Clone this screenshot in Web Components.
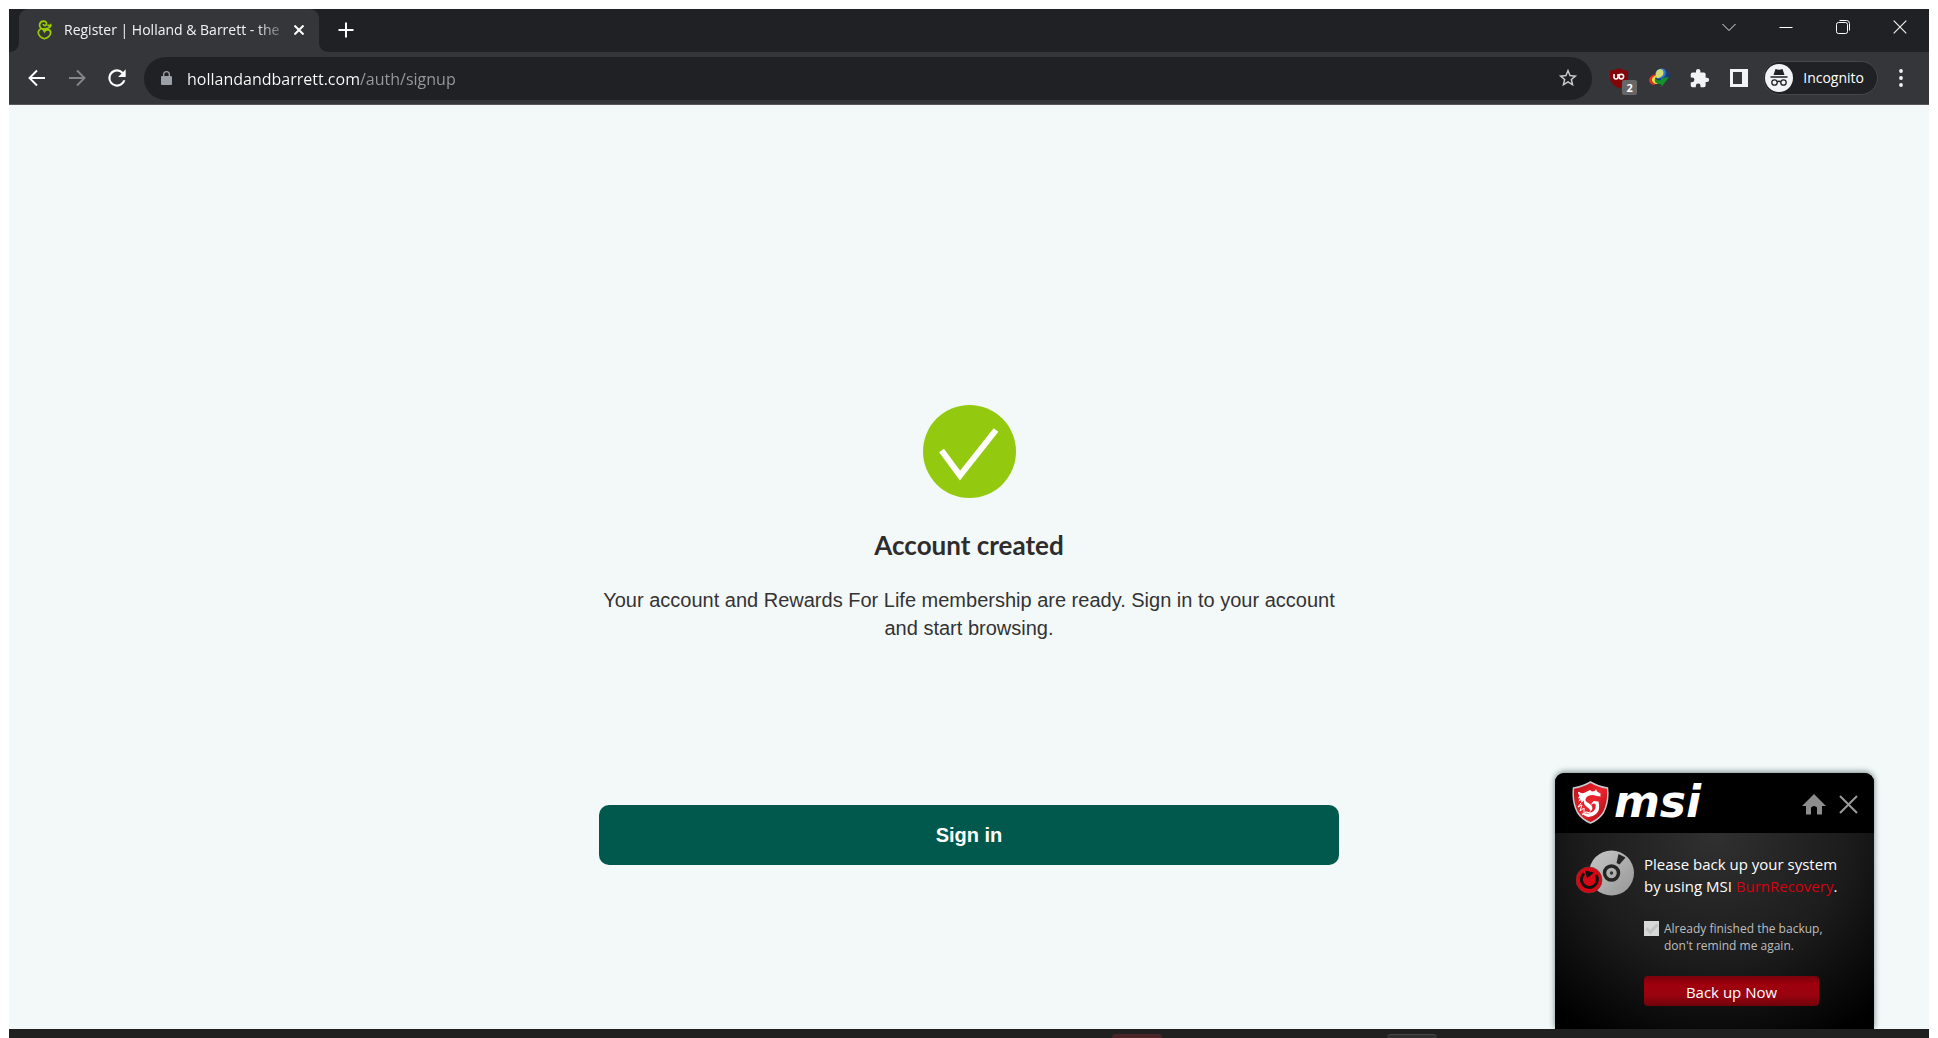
<!DOCTYPE html>
<html lang="en">
<head>
<meta charset="utf-8">
<title>Register | Holland &amp; Barrett</title>
<style>
html,body{height:100%}
body{margin:0;background:#fff;font-family:"Open Sans","Noto Sans",sans-serif;font-size:14px}
</style>
</head>
<body>
<desktop-screen>
  <tab-strip><browser-tab>Register | Holland &amp; Barrett - the</browser-tab></tab-strip>
  <tool-bar></tool-bar>
  <result-page>
    <span slot="title">Account created</span>
    <span slot="message">Your account and Rewards For Life membership are ready. Sign in to your account and start browsing.</span>
    <span slot="action">Sign in</span>
  </result-page>
  <task-bar></task-bar>
  <backup-popup slot="popup"></backup-popup>
</desktop-screen>
<script>
function define(name, markup) {
  const template = document.createElement('template');
  template.innerHTML = '<style>:host,*{box-sizing:border-box}button{font:inherit;color:inherit;background:none;border:0;padding:0;margin:0;cursor:pointer}svg{display:block}</style>' + markup;
  customElements.define(name, class extends HTMLElement {
    constructor() {
      super();
      this.attachShadow({mode: 'open'}).append(template.content.cloneNode(true));
    }
  });
}

define('desktop-screen', `
<style>
:host{display:flex;flex-direction:column;height:100vh;padding:9px 9px 0;position:relative;overflow:hidden}
slot[name=popup]::slotted(*){position:absolute;right:64px;bottom:9px}
</style>
<slot></slot><slot name="popup"></slot>`);

define('tab-strip', `
<style>
:host{display:flex;height:43px;background:#202124;color:#f1f3f4;flex:none}
.lead{width:10px;background:#35363a}
.lead i{display:block;height:100%;background:#202124;border-bottom-right-radius:9px}
.tail{background:#35363a}
.tail i{display:block;height:100%;width:9px;background:#202124;border-bottom-left-radius:9px}
.new{width:36px;height:42px;display:grid;place-items:center}
.win{margin-left:auto;display:flex;padding-right:1px}
.win button{width:57px;height:36px;display:grid;place-items:center}
</style>
<div class="lead"><i></i></div>
<slot></slot>
<div class="tail"><i></i></div>
<button class="new" aria-label="New tab"><svg width="16" height="16" stroke="#fff" stroke-width="2"><path d="M8 0.500v15M.5 8h15"/></svg></button>
<div class="win">
<button aria-label="Search tabs"><svg width="14" height="14" fill="none" stroke="#e8e8e8" stroke-width="1"><path d="M.5 4 7 10.500 13.500 4"/></svg></button>
<button aria-label="Minimise"><svg width="14" height="14" stroke="#fff"><path d="M.5 7.500h13"/></svg></button>
<button aria-label="Restore"><svg width="14" height="14" fill="none" stroke="#fff"><rect x=".5" y="2.500" width="11" height="11" rx="2"/><path d="M3.500.5h7q3 0 3 3v7"/></svg></button>
<button aria-label="Close"><svg width="14" height="14" stroke="#eee" stroke-width="1.200"><path d="M.7.7l12.600 12.600M13.300.7.7 13.300"/></svg></button>
</div>`);

define('browser-tab', `
<style>
:host{display:flex;align-items:center;width:300px;background:#35363a;border-radius:9px 9px 0 0;padding:0 10px 2px 17px}
.title{flex:1;margin-left:10px;overflow:hidden;white-space:nowrap;line-height:24px;-webkit-mask-image:linear-gradient(90deg,#000 88%,transparent 104%);mask-image:linear-gradient(90deg,#000 88%,transparent 104%)}
button{width:20px;height:20px;margin-left:7px;display:grid;place-items:center}
</style>
<svg width="18" height="20" fill="none" stroke="#9c0" stroke-width="1.700"><path d="M5.500 8.500C2.500 6.500 3 1.500 7.500 1.200c3.200 0 4 3 2 4.200Q7.500 6 7.300 4M5.500 8.500q3.500 1 7-.5 2.800-1.300 2.200-3.200-1.500 1.500-3 .2M5.500 8.500Q2 10 2.300 13.200q.7 3.800 6.200 5.600 5.500-1.800 6.200-5.600.2-3.400-2.900-3.600-2.300 0-3.300 2-1-2.200-3-3.100"/></svg>
<span class="title"><slot></slot></span>
<button aria-label="Close tab"><svg width="10" height="10" stroke="#fff" stroke-width="2"><path d="M0.500.5l9 9M9.500.5l-9 9"/></svg></button>`);

define('tool-bar', `
<style>
:host{display:flex;align-items:center;height:53px;background:#35363a;border-bottom:1px solid #5b5659;padding:0 8px;flex:none;color:#fff}
button{display:grid;place-items:center;width:40px;height:40px;flex:none}
address-bar{margin:0 7px}
.badged{position:relative}
.badge{position:absolute;left:23px;top:22px;width:15px;height:15px;border-radius:2px;background:#666;font:bold 11px/15px "Open Sans",sans-serif;text-align:center}
.mode{display:flex;width:auto;height:34px;gap:10px;align-items:center;border:1px solid #46474b;border-radius:17px;background:#202124;padding:0 13px 0 1px;margin:0 3px 0 4px;line-height:20px}
</style>
<button aria-label="Back"><svg width="18" height="18" fill="none" stroke="#fff" stroke-width="1.900"><path d="M17 9H2M9 1.500 1.500 9 9 16.500"/></svg></button>
<button aria-label="Forward"><svg width="18" height="18" fill="none" stroke="#85868a" stroke-width="1.900"><path d="M1 9h15M9 1.500 16.500 9 9 16.500"/></svg></button>
<button aria-label="Reload"><svg width="26" height="26" viewBox="0 0 24 24" fill="#fff"><path d="M17.650 6.350A7.950 7.950 0 0 0 12 4a8 8 0 1 0 7.730 10h-2.080A6 6 0 1 1 12 6c1.660 0 3.140.69 4.220 1.780L13 11h7V4l-2.350 2.350z"/></svg></button>
<address-bar></address-bar>
<button class="badged" aria-label="Content blocker">
<svg width="20" height="22" viewBox="0 0 20 22"><path d="M10 1Q13.500 3.500 19 3.500V10c0 5-3 8-9 11.500C4 18 1 15 1 10V3.500Q6.500 3.500 10 1z" fill="#850408"/><path d="M5 7v3q0 2 2 2t2-2V7v3" fill="none" stroke="#fff" stroke-width="1.600"/><circle cx="12.300" cy="9.600" r="2.300" fill="none" stroke="#fff" stroke-width="1.600"/></svg>
<span class="badge">2</span></button>
<button aria-label="Download manager"><svg width="22" height="20" viewBox="0 0 22 20"><defs><radialGradient id="g" cx=".35" cy=".3"><stop offset="0" stop-color="#dcecff"/><stop offset=".55" stop-color="#4b8fdc"/><stop offset="1" stop-color="#123c86"/></radialGradient></defs><circle cx="14" cy="7.500" r="7" fill="url(#g)"/><path d="M9 2.500q5-3 6 1t-3 6-5-2z" fill="#d3dc72"/><path d="M8 6C3 7 0 10 1.500 14c1 2 3 3 5 3l2-3c-3-1-3-4-.500-6z" fill="#d9352a"/><path d="M8.500 7C5 8.500 3 10.500 4.500 13.500c1 2 3 2.500 5 2.500v-2.500c-3-.5-3-3-1-5z" fill="#f5d93a"/><path d="M9 8.500c-2 2-1 4 4 3.700v-1.700l8-1.500-7.500 10v-2.800C7 16.500 4.500 12 9 8.500z" fill="#139328"/></svg></button>
<button aria-label="Extensions"><svg width="21" height="21" viewBox="0 0 24 24" fill="#f1f3f4"><path d="M20.500 11H19V7a2 2 0 0 0-2-2h-4V3.500a2.500 2.500 0 0 0-5 0V5H4a2 2 0 0 0-2 2v3.800h1.500a2.700 2.700 0 0 1 0 5.400H2V20a2 2 0 0 0 2 2h3.800v-1.500a2.700 2.700 0 0 1 5.400 0V22H17a2 2 0 0 0 2-2v-4h1.500a2.500 2.500 0 0 0 0-5z"/></svg></button>
<button aria-label="Side panel"><svg width="18" height="18" fill="#f1f3f4"><path fill-rule="evenodd" d="M0 0h18v18H0zM3 3v12h9V3z"/></svg></button>
<button class="mode"><svg width="28" height="28" fill="none" stroke="#202124" stroke-width="1.300"><circle cx="14" cy="14" r="14" fill="#f1f3f4" stroke="none"/><path d="M8.500 11 10.500 5q3.500 1.500 7 0l2 6z" fill="#202124" stroke="none"/><path d="M5.500 13h17M12 18q2-1.500 4 0"/><circle cx="9.500" cy="18.500" r="2.700"/><circle cx="18.500" cy="18.500" r="2.700"/></svg>Incognito</button>
<button aria-label="Menu"><svg width="4" height="18" fill="#f1f3f4"><circle cx="2" cy="2" r="1.900"/><circle cx="2" cy="9" r="1.900"/><circle cx="2" cy="16" r="1.900"/></svg></button>`);

define('address-bar', `
<style>
:host{display:flex;align-items:center;flex:1;height:43px;border-radius:22px;background:#202124;padding:0 11px 0 17px;min-width:0}
input{flex:1;min-width:0;height:32px;margin:0 0 0 15px;padding:1px 0 0;border:0;outline:0;font:16px/24px "Open Sans","Noto Sans",sans-serif;background:linear-gradient(90deg,#fff 173px,#999b9f 173px);-webkit-background-clip:text;background-clip:text;color:transparent}
button{width:24px;height:24px}
</style>
<svg width="11" height="14" viewBox="0 0 11 14" fill="#9aa0a6"><path fill-rule="evenodd" d="M2 5V3.500a3.500 3.500 0 0 1 7 0V5h1q1 0 1 1v7q0 1-1 1H1q-1 0-1-1V6q0-1 1-1zm1.300 0h4.400V3.500a2.200 2.200 0 0 0-4.400 0z"/></svg>
<input aria-label="Address" value="hollandandbarrett.com/auth/signup">
<button aria-label="Bookmark this page"><svg width="22" height="22" viewBox="0 0 24 24" fill="#c9ccd0"><path d="M22 9.240l-7.190-.62L12 2 9.190 8.630 2 9.240l5.460 4.730L5.820 21 12 17.270 18.180 21l-1.630-7.030L22 9.240zM12 15.400l-3.760 2.270 1-4.280-3.320-2.880 4.380-.38L12 6.100l1.710 4.040 4.380.38-3.320 2.880 1 4.280L12 15.400z"/></svg></button>`);

define('result-page', `
<style>
:host{display:flex;flex-direction:column;align-items:center;flex:1;min-height:0;background:#f3f9f9;padding:300px 16px 0;color:#333;font-family:"Liberation Sans",Arial,sans-serif}
svg{flex:none}
h1{font:bold 26px/36px Lato,sans-serif;margin:29px 0 0;color:#2f2d2c}
p{font-size:20px;line-height:28px;margin:23px 0 0;text-align:center;width:100%;max-width:740px}
button{width:100%;max-width:740px;height:60px;margin-top:163px;border-radius:10px;background:#00594c;color:#fff;font-weight:bold;font-size:20px;line-height:28px;flex:none}
</style>
<svg width="93" height="93" viewBox="0 0 93 93"><circle cx="46.500" cy="46.500" r="46.500" fill="#93c90f"/><path d="M18.500 45.500 37 70.500 73 25" fill="none" stroke="#fff" stroke-width="6"/></svg>
<h1><slot name="title"></slot></h1>
<p><slot name="message"></slot></p>
<button><slot name="action"></slot></button>`);

define('task-bar', `
<style>
:host{display:flex;height:9px;background:#202020;flex:none;padding:5px 492px 0 0;justify-content:flex-end;gap:225px}
i{width:50px;border-radius:5px 5px 0 0;background:#4a2527}
i+i{background:#2f2f2f;border-top:1px solid #484848}
</style><i></i><i></i>`);

define('backup-popup', `
<style>
:host{display:flex;flex-direction:column;width:319px;height:256px;border-radius:9px 9px 0 0;background:radial-gradient(ellipse 75% 90% at 50% 25%,#303030,#1c1c1c 55%,#000);color:#fff;box-shadow:0 -1px 6px #718080;clip-path:inset(-10px -10px 0)}
header{display:flex;align-items:center;height:60px;background:#000;border-radius:9px 9px 0 0;padding:0 16px 2px 17px;flex:none}
.brand{font:italic bold 44px/48px "DejaVu Sans",sans-serif;margin-left:5px;margin-right:auto}
header button{margin-left:13px;padding-top:4px}
section{display:flex;gap:10px;padding:17px 21px 0}
p{margin:3px 0 0;font-size:15px;line-height:22px;white-space:nowrap}
a{color:#d5000f;text-decoration:none}
label{display:flex;gap:5px;margin-top:23px;font-size:12px;line-height:17px;color:#bebebe;white-space:nowrap}
input{appearance:none;width:15px;height:15px;margin:1px 0 0;background:#d7d9d9;flex:none;display:grid;place-items:center}
input::after{content:"";width:9px;height:4px;border:solid #c2c4c4;border-width:0 0 3px 3px;transform:translateY(-1px) rotate(-45deg)}
.go{display:block;width:175px;height:30px;margin-top:22px;border-radius:4px;background:linear-gradient(#7a020b,#a0000d 30%,#990310 65%,#6f0209);font-size:15px;line-height:22px;padding:1px 0 0}
</style>
<header>
<svg width="37" height="43" viewBox="0 0 37 43"><defs><linearGradient id="r" x2="1" y2="1"><stop stop-color="#b90c15"/><stop offset=".5" stop-color="#ed2630"/><stop offset="1" stop-color="#a30610"/></linearGradient></defs><path d="M18.500 1Q26 5.500 35.500 7q1.500 14-4 24.500Q27 38.500 18.500 42 10 38.500 5.500 31.500 0 21 1.500 7 11 5.500 18.500 1z" fill="url(#r)" stroke="#c7cbcd" stroke-width="1.500"/><path d="M7 11q3 2 6 .5l5-2.500 2 1.500 3-.5 1-2 1 2.500 4 2.500-1 1 1 1.500-4-.5-4-1q-6 0-7.500 4-.5 2.500 3 4l3 2.500q2 3-.5 5.500-2 1.500-4.500.5l-2 .5q5 2 8.500-.5 3.500-3 2.500-7.500l-2-.5-3 1.500 3-4 5 .5 .5 3q1 6-3 9.500-3.500 3-7.500 3-4-.5-6.500-4l4 .5q5 .5 4.500-2.500-.5-2-3.500-4-4-3-3-6.500l-3 2.500 .5-3-3 1.500 1.500-3.500-2 .5 1.500-3q-1.500-1-1.500-3.500z" fill="#fff"/><path d="M9 22l-3 4 4-2-2 6 4-3 0 5M14 31l-4 3" fill="none" stroke="#fff"/></svg>
<span class="brand">msi</span>
<button aria-label="Home"><svg width="24" height="21" viewBox="0 0 24 21" fill="#8d8d8d"><path d="M12 0 24 12H20v8.500h-5v-7q-3-3-6 0v7H4V12H0z"/></svg></button>
<button aria-label="Close"><svg width="19" height="19" stroke="#9b9b9b" stroke-width="2"><path d="M1 1l17 17M18 1 1 18"/></svg></button>
</header>
<section>
<svg width="58" height="46" viewBox="0 0 58 46"><defs><linearGradient id="d" x2="1" y2="1"><stop stop-color="#c7c7c7"/><stop offset="1" stop-color="#969696"/></linearGradient></defs><circle cx="35.500" cy="23" r="22.500" fill="url(#d)"/><circle cx="35.500" cy="23" r="7" fill="none" stroke="#242424" stroke-width="3.500"/><circle cx="35.500" cy="23" r="1.700" fill="#333"/><path d="M42.500 4l7 3.500-6 7-3-1.500z" fill="#242424"/><circle cx="13" cy="30" r="13" fill="#d80714" stroke="#733" stroke-width=".7"/><path d="M8 23.500A8 8 0 1 0 20 25" fill="none" stroke="#111" stroke-width="3"/><path d="M9 20.500l9 2-7 6z" fill="#111"/></svg>
<div>
<p>Please back up your system<br>by using MSI <a href="#">BurnRecovery</a>.</p>
<label><input type="checkbox"><span>Already finished the backup,<br>don't remind me again.</span></label>
<button class="go">Back up Now</button>
</div>
</section>`);
</script>
</body>
</html>
